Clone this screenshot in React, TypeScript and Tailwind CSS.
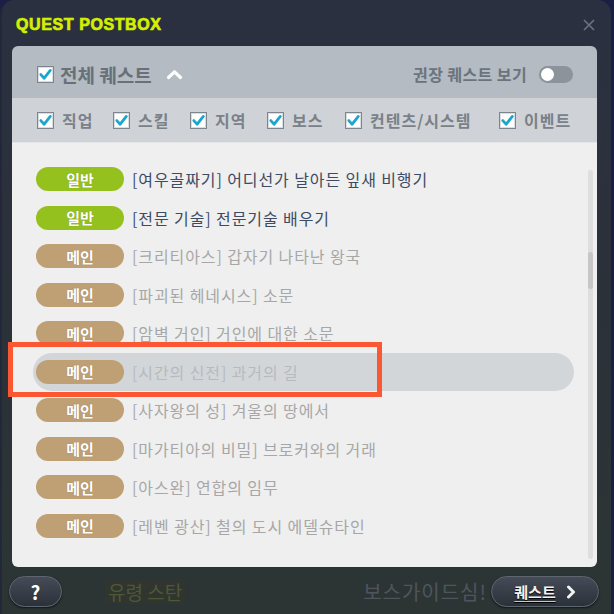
import React from "react";

const KR = { fontFamily: '"Noto Sans CJK KR", "Noto Sans", sans-serif' };

function Check() {
  return (
    <svg width="17" height="17" viewBox="0 0 17 17" className="shrink-0">
      <rect x="0.5" y="0.5" width="16" height="16" fill="#ffffff" stroke="#7e858c" />
      <rect x="1.5" y="1.5" width="14" height="14" fill="none" stroke="#d9dde0" />
      <path d="M3.8 8.6 L7.2 12.2 L13.3 4.4" fill="none" stroke="#19a6cf" strokeWidth="2.8" strokeLinecap="round" strokeLinejoin="round" />
    </svg>
  );
}

type Quest = { type: "일반" | "메인"; text: string; active?: boolean };

const quests: Quest[] = [
  { type: "일반", text: "[여우골짜기] 어디선가 날아든 잎새 비행기" },
  { type: "일반", text: "[전문 기술] 전문기술 배우기" },
  { type: "메인", text: "[크리티아스] 갑자기 나타난 왕국" },
  { type: "메인", text: "[파괴된 헤네시스] 소문" },
  { type: "메인", text: "[암벽 거인] 거인에 대한 소문" },
  { type: "메인", text: "[시간의 신전] 과거의 길", active: true },
  { type: "메인", text: "[사자왕의 성] 겨울의 땅에서" },
  { type: "메인", text: "[마가티아의 비밀] 브로커와의 거래" },
  { type: "메인", text: "[아스완] 연합의 임무" },
  { type: "메인", text: "[레벤 광산] 철의 도시 에델슈타인" },
];

const filters: { label: string; w: string }[] = [
  { label: "직업", w: "w-[76px]" },
  { label: "스킬", w: "w-[77px]" },
  { label: "지역", w: "w-[77px]" },
  { label: "보스", w: "w-[78px]" },
  { label: "컨텐츠/시스템", w: "w-[154px]" },
  { label: "이벤트", w: "w-auto" },
];

export default function App() {
  return (
    <div className="relative w-[614px] h-[614px] overflow-hidden bg-[#1c1f44]">
      <div className="flex flex-col w-[611px] h-[614px] rounded-t-[14px] bg-gradient-to-b from-[#2b3041] via-[#2b3139] to-[#2c3534] border-l-[2px] border-[#23273a]">
        {/* title */}
        <div className="flex items-center justify-between h-[46px] pl-[14px] pr-[16px] pt-[3px]">
          <div
            className="text-[16px] font-bold text-[#d4ef00] tracking-[0.6px]"
            style={{ fontFamily: '"Liberation Sans", Arial, sans-serif', WebkitTextStroke: "0.7px #d4ef00" }}
          >
            QUEST POSTBOX
          </div>
          <svg width="12" height="12" viewBox="0 0 12 12" className="mt-[1px]">
            <path d="M1 1 L11 11 M11 1 L1 11" stroke="#6c7282" strokeWidth="1.6" />
          </svg>
        </div>

        {/* panel */}
        <div className="ml-[10px] w-[585px] h-[521px] rounded-[6px] overflow-hidden flex flex-col" style={KR}>
          <div className="flex items-center justify-between h-[52px] bg-[#b4bbc3] pl-[25px] pr-[24px] pt-[4px]">
            <div className="flex items-center">
              <Check />
              <span className="ml-[6px] text-[19px] font-bold text-[#68717a] leading-none">전체 퀘스트</span>
              <svg width="17" height="11" viewBox="0 0 17 11" className="ml-[14px]">
                <path d="M2.5 8.5 L8.5 2.8 L14.5 8.5" fill="none" stroke="#ffffff" strokeWidth="3.2" strokeLinecap="round" strokeLinejoin="round" />
              </svg>
            </div>
            <div className="flex items-center">
              <span className="text-[16px] font-bold text-[#6b747d] leading-none tracking-[0.4px]">권장 퀘스트 보기</span>
              <div className="ml-[12px] w-[34px] h-[17px] rounded-full bg-[#8c939a] flex items-center px-[2px]">
                <div className="w-[13px] h-[13px] rounded-full bg-white" />
              </div>
            </div>
          </div>
          <div className="flex items-center h-[45px] bg-[#cfd3d7] pl-[25px] border-b border-[#e4e6e8]">
            {filters.map((f) => (
              <div key={f.label} className={`flex items-center ${f.w}`}>
                <Check />
                <span className="ml-[8px] text-[16px] font-bold text-[#7a8189] leading-none tracking-[1px]">{f.label}</span>
              </div>
            ))}
          </div>
          <div className="relative flex-1 bg-[#efefef] pt-[17px]">
            {quests.map((q, i) => (
              <div
                key={i}
                className={`flex items-center h-[38.5px] ml-[21px] w-[541px] pl-[3px] rounded-full ${
                  q.active ? "bg-[#d3d6d9]" : ""
                }`}
              >
                <div
                  className={`w-[88px] h-[24px] rounded-full flex items-center justify-center text-white font-bold text-[15px] leading-none ${
                    q.type === "일반" ? "bg-[#95c11f]" : "bg-[#bf9f74]"
                  }`}
                  style={{ textShadow: "0 0 1px rgba(0,0,0,0.25)" }}
                >
                  {q.type}
                </div>
                <span
                  className={`ml-[8px] text-[16px] leading-none tracking-[0.9px] ${
                    q.type === "일반" ? "text-[#3c4b63]" : q.active ? "text-[#b6babe]" : "text-[#a7a7a7]"
                  }`}
                >
                  {q.text}
                </span>
              </div>
            ))}
            {/* scrollbar */}
            <div className="absolute right-[4px] top-[27px] bottom-[8px] w-[5px] rounded-full bg-[#dedede]">
              <div className="absolute left-0 right-0 top-[82px] h-[37px] rounded-full bg-[#c6c6c6]" />
            </div>
          </div>
        </div>

        {/* bottom bar */}
        <div className="flex items-center justify-between flex-1 pl-[7px] pr-[12px] pt-[2px]" style={KR}>
          <div className="flex items-center">
            <div className="w-[53px] h-[31px] rounded-full border border-[#5e656e] bg-gradient-to-b from-[#454c57] to-[#2b3139] flex items-center justify-center text-white font-bold text-[19px] leading-none shadow-[0_1px_2px_rgba(0,0,0,0.6)]">
              ?
            </div>
            <div className="ml-[43px] px-[3px] bg-[#30362f] text-[19px] leading-[24px] text-[#4d5836]">유령 스탄</div>
          </div>
          <div className="flex items-center">
            <div className="text-[20px] leading-[24px] text-[#4f555d] tracking-[1px]">보스가이드심!</div>
            <div className="ml-[4px] w-[108px] h-[31px] rounded-full border border-[#5e656e] bg-gradient-to-b from-[#454c57] to-[#2b3139] flex items-center justify-center gap-[10px] shadow-[0_1px_2px_rgba(0,0,0,0.6)]">
              <span className="text-[15px] font-bold text-[#f2f2f2] leading-none underline underline-offset-[3px] decoration-[#c8c8c8]" style={{ textShadow: "0 1px 1px #000" }}>
                퀘스트
              </span>
              <svg width="10" height="14" viewBox="0 0 10 14">
                <path d="M2.5 2 L7.5 7 L2.5 12" fill="none" stroke="#f2f2f2" strokeWidth="3" strokeLinecap="round" strokeLinejoin="round" />
              </svg>
            </div>
          </div>
        </div>
      </div>

      {/* annotation */}
      <div className="absolute left-[8px] top-[342px] w-[374px] h-[55px] border-[5px] border-[#fb5733] pointer-events-none" />
    </div>
  );
}
